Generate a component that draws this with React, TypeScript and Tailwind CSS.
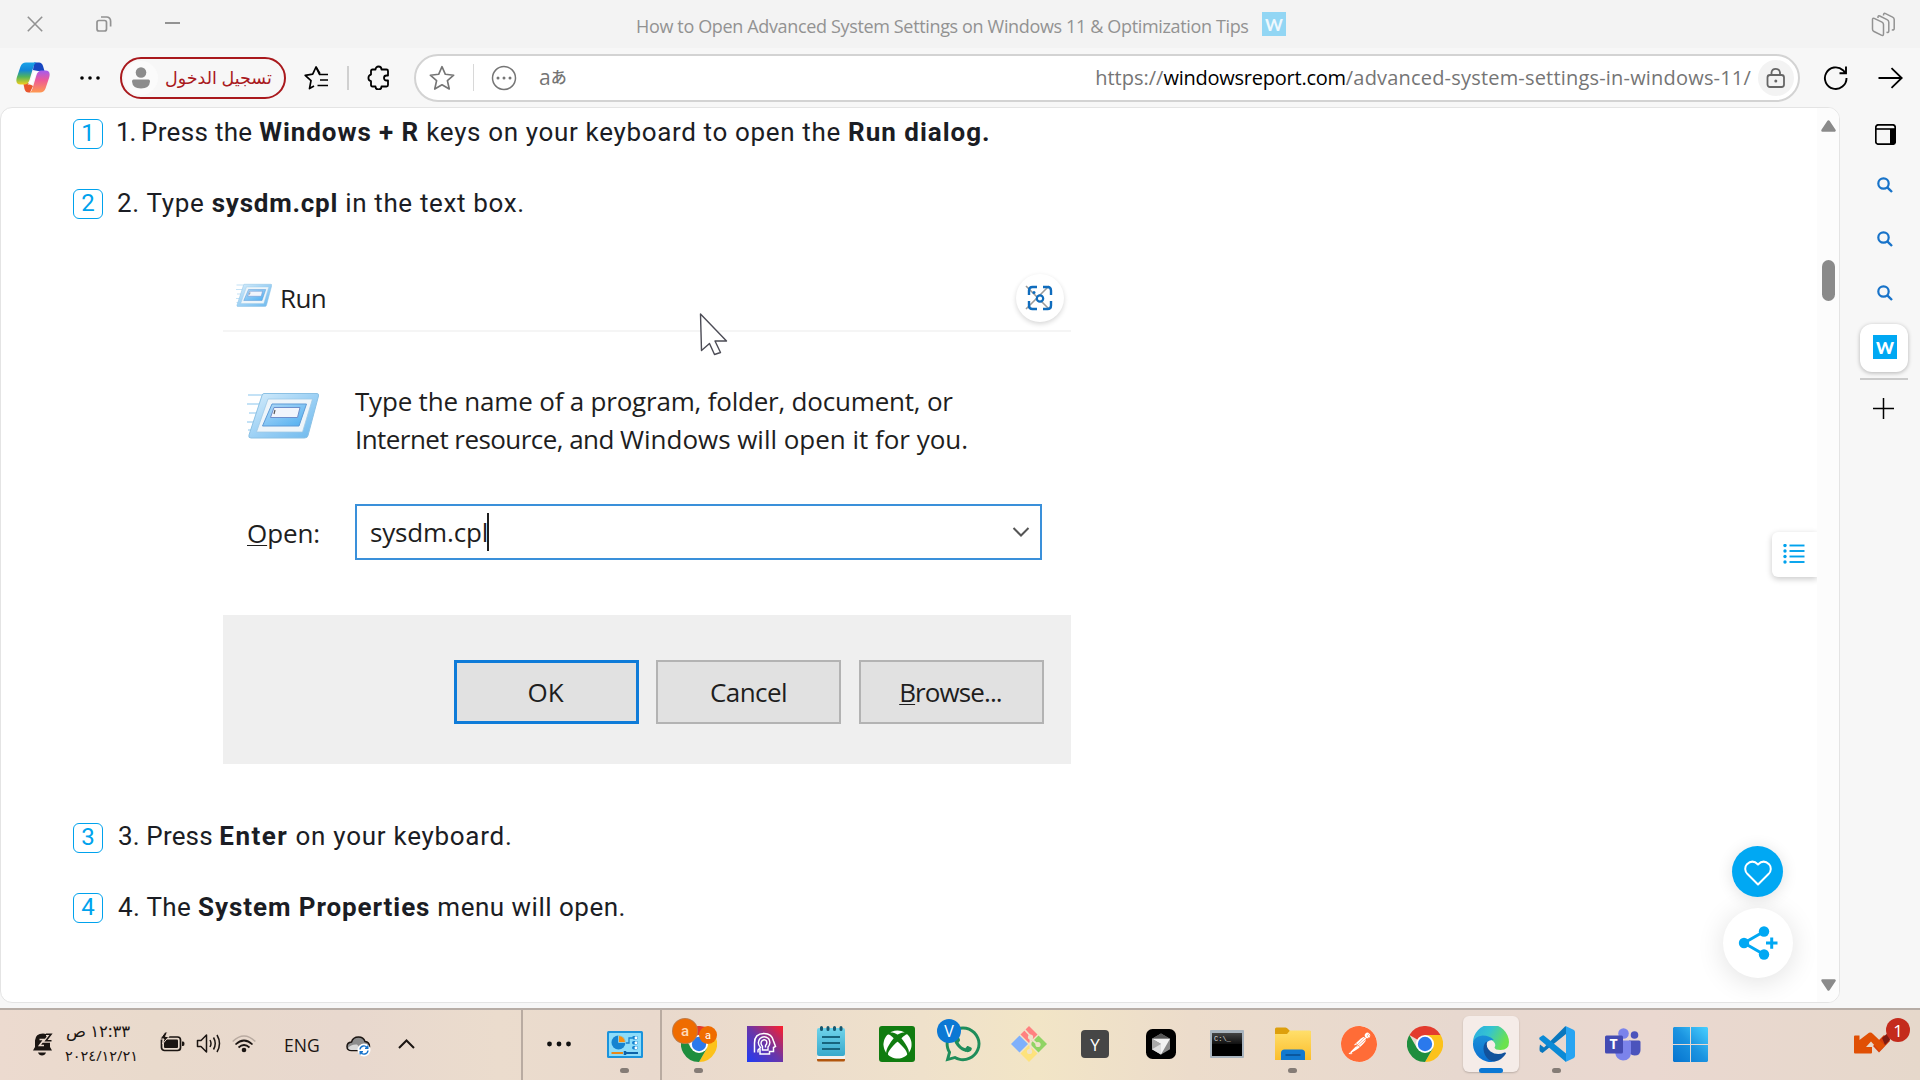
import React from "react";
import { FaWhatsapp, FaXbox } from "react-icons/fa";
import { SiPostman } from "react-icons/si";

type Segment = { text: string; bold?: boolean; cls: string };

const Svg = ({ w, h, vb, children, className = "" }: { w: number; h: number; vb?: string; children: React.ReactNode; className?: string }) => (
  <svg width={w} height={h} viewBox={vb ?? `0 0 ${w} ${h}`} fill="none" className={`shrink-0 ${className}`}>
    {children}
  </svg>
);

/* ---------- browser title bar ---------- */

function TitleBar() {
  return (
    <header className="flex h-12 items-center bg-[#f3f3f3] text-[#929292]">
      <Svg w={16} h={16} className="ml-[27px]">
        <path d="M0.8 0.8L15.2 15.2M15.2 0.8L0.8 15.2" stroke="currentColor" strokeWidth="1.6" />
      </Svg>
      <Svg w={16} h={16} className="ml-[53px]">
        <rect x="1" y="4.5" width="9.5" height="10.5" rx="2" stroke="currentColor" strokeWidth="1.7" />
        <path d="M5 1H10.5A4 4 0 0 1 14.6 5.2V10.5" stroke="currentColor" strokeWidth="1.7" />
      </Svg>
      <div className="-mt-0.5 ml-[53px] h-0.5 w-[15px] bg-[#929292]" />
      <h1 className="ml-[456px] mt-[3px] w-[613px] whitespace-nowrap font-['Open_Sans',sans-serif] text-[18px] leading-6 tracking-[-0.35px]">
        How to Open Advanced System Settings on Windows 11 &amp; Optimization Tips
      </h1>
      <div className="ml-[13px] flex size-6 items-center justify-center bg-[#92d6f4] font-['Lato',sans-serif] text-[17px] font-bold leading-none text-[#eef8fd]">W</div>
      <Svg w={25} h={25} className="ml-auto mr-6">
        <path d="M1.5 7.5Q1.5 5.7 3.2 6.4L11 10.2Q12.5 11 12.5 12.6V21.8Q12.5 24.3 10.3 23.2L3 19.5Q1.5 18.8 1.5 17.2Z" stroke="currentColor" strokeWidth="1.5" />
        <path d="M7 6V5Q7 3.3 8.8 4L16 7.6Q17.8 8.5 17.8 10.2V19Q17.8 20.8 15.5 20.3" stroke="currentColor" strokeWidth="1.5" />
        <path d="M12.5 3.5V2.8Q12.8 .8 14.6 1.6L21.6 5.2Q23.2 6 23.2 7.6V16.5Q23.2 18.4 20.8 17.8" stroke="currentColor" strokeWidth="1.5" />
      </Svg>
    </header>
  );
}

/* ---------- toolbar ---------- */

const CopilotLogo = () => (
  <Svg w={34} h={31}>
    <defs>
      <linearGradient id="cpA" x1="0" y1="0" x2="0" y2="1">
        <stop stopColor="#1aa3e8" /><stop offset=".35" stopColor="#1286d8" /><stop offset=".65" stopColor="#52b45a" /><stop offset="1" stopColor="#f2cf1d" />
      </linearGradient>
      <linearGradient id="cpB" x1="0" y1="0" x2="0" y2="1">
        <stop stopColor="#a45cf0" /><stop offset=".45" stopColor="#ee5a96" /><stop offset="1" stopColor="#ff9a50" />
      </linearGradient>
    </defs>
    <path d="M18 0.5H23Q26 .5 27 4L28.5 9H22L17 8Z" fill="#1746c0" />
    <path d="M7.500 22L12 21L17 24L14 30.500H12.500Q9.500 30.500 8.500 27Z" fill="#e8572f" />
    <path d="M10 .5H20.500Q18.500 1 17.500 4.500L13.500 18Q12 22.500 8.500 22.500H4.500Q-1 22.500 .8 15.500L4.500 4.500Q6 .5 10 .5Z" fill="url(#cpA)" />
    <path d="M24 30.500H13.500Q15.500 30 16.500 26.500L20.500 13Q22 8.500 25.500 8.500H29.500Q35 8.500 33.200 15.500L29.500 26.500Q28 30.500 24 30.500Z" fill="url(#cpB)" />
    <path d="M18 9.500H22Q20 11 18.500 16L16 22.500H11.500Q14 21 15.500 16Z" fill="#fff" />
  </Svg>
);

const STAR = "M12 1.5L15.100 8.600L22.800 9.400L17 14.500L18.700 22.200L12 18.200L5.300 22.200L7 14.500L1.200 9.400L8.900 8.600Z";

function Toolbar() {
  return (
    <div className="flex h-[59px] items-center bg-[#f7f7f7] text-black">
      <div className="ml-4 flex"><CopilotLogo /></div>
      <Svg w={20} h={4} className="ml-[30px]">
        <circle cx="2" cy="2" r="1.800" fill="#000" /><circle cx="10" cy="2" r="1.800" fill="#000" /><circle cx="18" cy="2" r="1.800" fill="#000" />
      </Svg>
      <div className="ml-5 flex h-[42px] w-[166px] items-center rounded-full border-2 border-[#a9191d] bg-[#f7f7f7]">
        <div className="ml-0.5 flex size-[34px] shrink-0 items-center justify-center rounded-full bg-[#fbfbfb]">
          <Svg w={18} h={22}>
            <circle cx="9" cy="5.500" r="5.300" fill="#8c8c8c" />
            <path d="M1.500 12.500H16.500Q18 12.500 18 14.500Q17.500 21.500 9 21.500Q.5 21.500 0 14.500Q0 12.500 1.500 12.500Z" fill="#8c8c8c" />
          </Svg>
        </div>
        <span dir="rtl" className="-mt-0.5 ml-[7px] whitespace-nowrap font-['Noto_Sans','DejaVu_Sans',sans-serif] text-[17.500px] leading-6 text-[#a9191d]">تسجيل الدخول</span>
      </div>
      <Svg w={25} h={24} className="ml-[18px]">
        <path d="M16 7.800L12 1L8.700 8.200L1.200 9.300L7 14.600L5.500 22.600L10 20" stroke="#000" strokeWidth="1.700" strokeLinejoin="round" />
        <path d="M12 1L15.500 8.300M15 8.500H24M16 14H24M13.500 19.500H24" stroke="#000" strokeWidth="1.700" />
      </Svg>
      <div className="ml-[18px] h-6 w-0.5 bg-[#d0d0d0]" />
      <Svg w={23} h={25} className="ml-[18px]">
        <path d="M8.500 4.500A3 3 0 0 1 14.500 4.500H19.500Q21 4.500 21 6V10.500H19.500A2.300 2.300 0 0 0 19.500 15.500H21V20Q21 21.500 19.500 21.500H14.500A3 3 0 0 1 8.500 21.500H5.500Q4 21.500 4 20V16.200A3.400 3.400 0 0 1 4 9.600V6Q4 4.500 5.500 4.500Z" stroke="#000" strokeWidth="1.800" strokeLinejoin="round" />
      </Svg>
      <div className="ml-6 flex h-12 w-[1386px] items-center rounded-full border-2 border-[#d3d3d3] bg-white text-[#757575]">
        <Svg w={26} h={26} vb="0 0 24 24" className="ml-[13px]">
          <path d={STAR} stroke="currentColor" strokeWidth="1.500" strokeLinejoin="round" />
        </Svg>
        <div className="ml-[18px] h-[27px] w-px bg-[#d8d8d8]" />
        <Svg w={26} h={26} className="ml-[17px]">
          <circle cx="13" cy="13" r="11.500" stroke="currentColor" strokeWidth="1.500" />
          <circle cx="7" cy="13" r="1.500" fill="currentColor" /><circle cx="13" cy="13" r="1.500" fill="currentColor" /><circle cx="19" cy="13" r="1.500" fill="currentColor" />
        </Svg>
        <div className="ml-[22px] flex h-6 items-center whitespace-nowrap">
          <span className="-mt-0.5 font-['Open_Sans',sans-serif] text-[21px] leading-6">a</span>
          <span className="-mt-1 font-['Noto_Sans_CJK_JP',sans-serif] text-[16px] font-medium leading-6">あ</span>
        </div>
        <div className="ml-auto mt-px flex whitespace-pre font-['Open_Sans',sans-serif] text-[20px] leading-6">
          <span>https://</span>
          <span className="tracking-[-0.24px] text-black">windowsreport.com</span>
          <span className="tracking-[0.19px]">/advanced-system-settings-in-windows-11/</span>
        </div>
        <div className="ml-[7px] mr-1 flex size-9 items-center justify-center rounded-full bg-[#f3f3f3]">
          <Svg w={20} h={22}>
            <rect x="1.500" y="8" width="16.500" height="12" rx="2.500" stroke="#666" strokeWidth="1.800" />
            <path d="M5.500 8V5.500A4.300 4.300 0 0 1 14 5.500V8" stroke="#666" strokeWidth="1.800" />
            <circle cx="9.800" cy="14" r="1.500" fill="#666" />
          </Svg>
        </div>
      </div>
      <Svg w={26} h={26} className="ml-[23px]">
        <path d="M23.500 13A10.800 10.800 0 1 1 20 5.200L22.500 8M23 1.500V8.200H16.500" stroke="#000" strokeWidth="1.900" />
      </Svg>
      <Svg w={25} h={22} className="ml-[29px]">
        <path d="M.5 11H23.500M13.500 1.200L23.700 11L13.500 20.800" stroke="#000" strokeWidth="1.800" />
      </Svg>
    </div>
  );
}

/* ---------- article ---------- */

function Step({ n, start, segments }: { n: number; start: string; segments: Segment[] }) {
  return (
    <div className="ml-[72px] flex h-[30px] items-start">
      <div className="flex h-[30px] w-[30px] items-center justify-center rounded-md border border-[#00a2ed] pb-0.5 font-['Roboto',sans-serif] text-[24px] leading-none text-[#00a2ed]">{n}</div>
      <p className={`${start} whitespace-pre font-['Roboto',sans-serif] text-[26px] leading-[26px] text-[#1b1d24]`}>
        {segments.map((s, i) => (
          <span key={i} className={`${s.bold ? "font-bold" : "font-normal"} ${s.cls}`}>{s.text}</span>
        ))}
      </p>
    </div>
  );
}

function RunIcon({ w, h, id }: { w: number; h: number; id: string }) {
  return (
    <Svg w={w} h={h} vb="0 0 72 48">
      <defs>
        <linearGradient id={id} x1="0" y1="0" x2="1" y2="1">
          <stop stopColor="#d9eefb" /><stop offset=".5" stopColor="#9dd1f5" /><stop offset="1" stopColor="#6cb8ed" />
        </linearGradient>
        <linearGradient id={`${id}i`} x1="0" y1="0" x2="1" y2="1">
          <stop stopColor="#b4dbf8" /><stop offset="1" stopColor="#4eaef0" />
        </linearGradient>
      </defs>
      <path d="M1 3H17M0 12H14M2 21H11M0 30H8M1 38H6" stroke="#c4e2f6" strokeWidth="2.200" />
      <path d="M17 1.500H70Q72 1.500 71.500 4L61 43.500Q60.500 46 57.500 46H4Q1 46 2 43L15 3.500Q15.500 1.500 17 1.500Z" fill={`url(#${id})`} stroke="#8cc1e4" strokeWidth="1" />
      <path d="M21 7H65.500L55.500 40H9.500Z" fill="#eef5fa" stroke="#9fc9e6" strokeWidth=".8" />
      <path d="M25 12H59.500L52 34H15.500Z" fill={`url(#${id}i)`} stroke="#5e9bd6" strokeWidth="1" />
      <path d="M27 15.500H53L50.500 25.500H23.500Z" fill="#f1f5fc" stroke="#6e8ecb" strokeWidth="1" />
      <path d="M28 18L27 22" stroke="#555" strokeWidth="1.200" />
    </Svg>
  );
}

function RunDialog() {
  return (
    <figure className="ml-[222px] mt-[11px] w-[848px] font-['Open_Sans',sans-serif] text-[26px] text-[#1e1e1e]">
      <div className="flex h-[102px] border-b-2 border-[#f5f5f5] bg-white">
        <div className="ml-[13px] mt-[53px]"><RunIcon w={36} h={25} id="runSmall" /></div>
        <span className="ml-2 mt-[50px] leading-9 tracking-[-0.6px]">Run</span>
        <div className="relative ml-auto mr-[7px] mt-11 flex size-12 items-center justify-center rounded-full bg-white shadow-[0_2px_5px_rgba(0,0,0,0.16)]">
          <Svg w={28} h={26} className="-ml-[3px]">
            <path d="M1 1L24 24M24 1L1 24" stroke="#9a9a9a" strokeWidth="1.600" />
            <path d="M4 10V5.500Q4 2 7.500 2H12M18 2H22.500Q26 2 26 5.500V10M26 16V20.500Q26 24 22.500 24H18M12 24H7.500Q4 24 4 20.500V16" stroke="#0f6cbd" strokeWidth="2.400" />
            <circle cx="15" cy="13.500" r="3.200" stroke="#0f6cbd" strokeWidth="2.200" fill="#fff" />
            <circle cx="9" cy="7.500" r="1.500" fill="#0f6cbd" />
          </Svg>
        </div>
      </div>
      <div className="flex h-[172px] pt-[51px]">
        <div className="ml-6 mt-[9px]"><RunIcon w={72} h={48} id="runLarge" /></div>
        <div className="ml-9 whitespace-nowrap leading-[37.500px]">
          <div className="tracking-[-0.2px]">Type the name of a program, folder, document, or</div>
          <div className="whitespace-pre"><span className="tracking-[-0.55px]">Internet resource, and </span><span className="tracking-[-0.02px]">Windows will open it for you.</span></div>
        </div>
      </div>
      <div className="flex h-[111px]">
        <label className="ml-6 mt-[11px] w-[108px] leading-9 tracking-[-0.1px]"><span className="underline decoration-1 underline-offset-2">O</span>pen:</label>
        <div className="flex h-14 w-[687px] items-center border-2 border-[#3a90da] bg-white">
          <span className="ml-[13px] leading-9 tracking-[-0.15px]">sysdm.cpl</span>
          <span className="-ml-px h-[38px] w-0.5 bg-[#1e1e1e]" />
          <Svg w={18} h={10} className="ml-auto mr-[10px]"><path d="M1.500 1L9 8.500L16.500 1" stroke="#555" strokeWidth="2" /></Svg>
        </div>
      </div>
      <div className="flex h-[149px] items-start bg-[#efefef] pl-[231px] pt-[45px]">
        <div className="flex h-16 w-[185px] items-center justify-center border-[3px] border-[#0e7bd8] bg-[#e1e1e1] pr-0.5">OK</div>
        <div className="ml-[17px] flex h-16 w-[185px] items-center justify-center border-2 border-[#b3b3b3] bg-[#e1e1e1] tracking-[-0.6px]">Cancel</div>
        <div className="ml-[18px] flex h-16 w-[185px] items-center justify-center border-2 border-[#b3b3b3] bg-[#e1e1e1] pr-0.5 tracking-[-0.9px]">
          <span className="underline decoration-1 underline-offset-2">B</span>rowse...
        </div>
      </div>
    </figure>
  );
}

function Article() {
  return (
    <main className="relative flex h-[896px] w-[1840px] overflow-hidden rounded-xl border border-[#e4e4e4] bg-white">
      <article className="flex-1 pt-[11px]">
        <div className="flex flex-col gap-10">
          <Step n={1} start="ml-[13px]" segments={[
            { text: "1. ", cls: "tracking-[-1px]" },
            { text: "Press the ", cls: "tracking-[0.32px]" },
            { text: "Windows + R", bold: true, cls: "tracking-[0.93px]" },
            { text: " keys on your keyboard to open the ", cls: "tracking-[0.65px]" },
            { text: "Run dialog", bold: true, cls: "tracking-[1px]" },
            { text: ".", bold: true, cls: "" },
          ]} />
          <Step n={2} start="ml-[14px] pt-px" segments={[
            { text: "2. Type ", cls: "tracking-[0.7px]" },
            { text: "sysdm.cpl", bold: true, cls: "tracking-[0.75px]" },
            { text: " in the text box.", cls: "tracking-[0.65px]" },
          ]} />
        </div>
        <RunDialog />
        <div className="mt-[59px] flex flex-col gap-10">
          <Step n={3} start="ml-[15px]" segments={[
            { text: "3. Press ", cls: "tracking-[0.15px]" },
            { text: "Enter", bold: true, cls: "tracking-[1.5px]" },
            { text: " on your keyboard.", cls: "tracking-[0.72px]" },
          ]} />
          <Step n={4} start="ml-[15px] pt-px" segments={[
            { text: "4. The ", cls: "tracking-[0.36px]" },
            { text: "System Properties", bold: true, cls: "tracking-[0.92px]" },
            { text: " menu will open.", cls: "tracking-[0.5px]" },
          ]} />
        </div>
      </article>

      <div className="flex w-[22px] flex-col items-center bg-[#fcfcfc]">
        <Svg w={15} h={12} className="mt-3"><path d="M7.500 1.500L13.500 10.500H1.500Z" fill="#8a8a8a" stroke="#8a8a8a" strokeWidth="2.500" strokeLinejoin="round" /></Svg>
        <div className="mt-[128px] h-[41px] w-[13px] rounded-full bg-[#8a8a8a]" />
        <Svg w={15} h={12} className="mb-[11px] mt-auto"><path d="M7.500 10.500L13.500 1.500H1.500Z" fill="#8a8a8a" stroke="#8a8a8a" strokeWidth="2.500" strokeLinejoin="round" /></Svg>
      </div>

      <button className="absolute left-[1771px] top-[424px] flex h-[45px] w-[45px] items-center justify-start rounded-l-md bg-white pl-[11px] shadow-[0_2px_6px_rgba(0,0,0,0.22)] [clip-path:inset(-10px_0_-10px_-10px)]">
        <Svg w={22} h={20} className="-mt-px">
          {[1.5, 7, 12.500, 18].map((y) => (
            <g key={y}><circle cx="2" cy={y} r="1.700" fill="#00a2ed" /><path d={`M6.500 ${y}H21.500`} stroke="#00a2ed" strokeWidth="1.900" /></g>
          ))}
        </Svg>
      </button>
      <button className="absolute left-[1731px] top-[738px] flex size-[51px] items-center justify-center rounded-full bg-[#00a8f3] shadow-[0_2px_16px_rgba(0,0,0,0.12)]">
        <Svg w={28} h={26} className="mt-0.5"><path d="M14 24.500L3.500 14A7 7 0 0 1 3 4.200Q8.500-1 14 4.500Q19.500-1 25 4.200A7 7 0 0 1 24.500 14Z" stroke="#fff" strokeWidth="2" strokeLinejoin="round" /></Svg>
      </button>
      <button className="absolute left-[1722px] top-[800px] flex size-[70px] items-center justify-center rounded-full bg-white shadow-[0_4px_28px_rgba(0,0,0,0.12)]">
        <Svg w={40} h={34}>
          <path d="M6 17L26 5.500M6 17L26 28.500" stroke="#00a8f3" strokeWidth="3" />
          <circle cx="6" cy="17" r="5.200" fill="#00a8f3" /><circle cx="26" cy="5.500" r="5.200" fill="#00a8f3" /><circle cx="26" cy="28.500" r="5.200" fill="#00a8f3" />
          <path d="M28 17H39.500M33.700 11.500V22.700" stroke="#00a8f3" strokeWidth="3" />
        </Svg>
      </button>
      <Svg w={31} h={44} className="absolute left-[697px] top-[204px]">
        <path d="M2.500 2L28.500 29H17L22.500 40.500L16.500 42.500L11.500 31.500L3.500 38.500Z" fill="#fff" stroke="#4c4c56" strokeWidth="1.400" strokeLinejoin="round" />
      </Svg>
    </main>
  );
}

const SearchTab = () => (
  <Svg w={16} h={16}>
    <circle cx="6.500" cy="6.500" r="5.200" stroke="#1873c9" strokeWidth="2.200" />
    <path d="M10.300 10.300L15 15" stroke="#1873c9" strokeWidth="2.400" />
  </Svg>
);

function TabRail() {
  return (
    <aside className="flex w-20 flex-col items-center pl-2">
      <Svg w={21} h={21} className="ml-[3px] mt-[17px]">
        <rect x=".8" y=".8" width="19.400" height="19.400" rx="2.500" stroke="#000" strokeWidth="1.700" />
        <path d="M1 5H20" stroke="#000" strokeWidth="1.600" /><path d="M15 5H20.500V18Q20 20 18.500 20.500H15Z" fill="#000" />
      </Svg>
      <div className="ml-0.5 mt-8 flex flex-col gap-[38px]"><SearchTab /><SearchTab /><SearchTab /></div>
      <div className="mt-[23px] flex size-12 justify-center rounded-xl bg-white pl-0.5 pt-[11px] shadow-[0_1px_4px_rgba(0,0,0,0.28)]">
        <div className="flex size-6 items-center justify-center bg-[#00a8f3] font-['Lato',sans-serif] text-[17px] font-black leading-none text-white">W</div>
      </div>
      <div className="mt-1.5 h-0.5 w-12 bg-[#cbcbcb]" />
      <Svg w={21} h={21} className="mr-[1px] mt-[18px]"><path d="M0 10.500H21M10.500 0V21" stroke="#000" strokeWidth="1.500" /></Svg>
    </aside>
  );
}

/* ---------- taskbar ---------- */

const Chrome = () => (
  <Svg w={36} h={36}>
    <path d="M18 18L2.400 9A18 18 0 0 1 33.600 9Z" fill="#e33b2e" />
    <path d="M18 9H33.600A18 18 0 0 1 18 36L25.800 22.500Z" fill="#fcc21b" />
    <path d="M2.400 9A18 18 0 0 0 18 36L25.800 22.500L10.200 22.500Z" fill="#1e8e3e" />
    <circle cx="18" cy="18" r="9" fill="#fff" /><circle cx="18" cy="18" r="7.200" fill="#2b79ec" />
  </Svg>
);

const ControlPanel = () => (
  <Svg w={36} h={27}>
    <rect width="36" height="27" rx="1.500" fill="#1a93dc" /><rect x="2" y="2" width="32" height="23" rx=".5" fill="#8cdcfa" />
    <circle cx="11.500" cy="11.500" r="7" fill="#1583d0" /><path d="M11.500 11.500V4.500A7 7 0 0 1 18.500 11.500Z" fill="#f78f12" stroke="#8cdcfa" strokeWidth=".8" />
    <path d="M19 12H22V7H25" stroke="#1583d0" strokeWidth="1.300" />
    {[5, 10, 15].map((y) => <g key={y}><rect x="25" y={y} width="6" height="3.400" rx="1.700" fill="#1583d0" /><circle cx="29" cy={y + 1.7} r="1.500" fill="#fff" /></g>)}
    <path d="M4.500 22H16" stroke="#e8881a" strokeWidth="2" /><path d="M17 22H31" stroke="#0d63a9" strokeWidth="2" /><path d="M18 20V24" stroke="#0d63a9" strokeWidth="2.500" />
  </Svg>
);

const HeadApp = () => (
  <Svg w={36} h={36}>
    <defs><linearGradient id="head" x1="0" y1="1" x2="1" y2="0"><stop offset="0" stopColor="#1f3cf5" /><stop offset=".5" stopColor="#6a35a8" /><stop offset="1" stopColor="#ff1e2a" /></linearGradient></defs>
    <rect width="36" height="36" fill="url(#head)" />
    <path d="M7.500 26.500V17Q7.500 7.500 17 7.500Q25 7.500 26.500 15L28.500 20.500L26.500 21.500V25.500H22.500V28H13V22.500" stroke="#fff" strokeWidth="1.500" />
    <path d="M11 26.500V24L13.500 21.500Q9.500 17 13 12.500Q17 9 21.500 12.500Q24.500 17 21 21V24H15.500V20.500Q12.800 17.500 15 14.800Q17.500 12.500 19.500 15Q20.500 17.500 18.500 19.500V21.500" stroke="#fff" strokeWidth="1.400" />
  </Svg>
);

const Notepad = () => (
  <Svg w={28} h={36}>
    <defs><linearGradient id="note" x1="0" y1="0" x2="0" y2="1"><stop stopColor="#6fd3ea" /><stop offset="1" stopColor="#38a9cc" /></linearGradient></defs>
    <rect y="29" width="28" height="6.500" rx="1.500" fill="#b2560d" /><rect y="27" width="28" height="6" fill="#f4f1ee" /><rect y="2" width="28" height="28" rx="2" fill="url(#note)" />
    <path d="M4.500 1.500V3.500M11 1.500V3.500M17.500 1.500V3.500M24 1.500V3.500" stroke="#17586f" strokeWidth="3" strokeLinecap="round" />
    <path d="M5 11H23M5 17H23M5 23H23" stroke="#17647d" strokeWidth="2" />
  </Svg>
);

const GitLogo = () => (
  <Svg w={36} h={36}>
    <path d="M18 0L26.500 8.500L18 17L9.500 8.500Z" fill="#ff8180" /><path d="M8.500 9.500L17 18L8.500 26.500L0 18Z" fill="#7fb0fb" />
    <path d="M27.500 9.500L36 18L27.500 26.500L19 18Z" fill="#90d464" /><path d="M18 19L26.500 27.500L18 36L9.500 27.500Z" fill="#fde27c" />
    <path d="M13 3L19.500 10V26M19.500 12L27 19" stroke="#efe2ca" strokeWidth="1.800" />
    <circle cx="19.500" cy="11" r="2.600" fill="#efe2ca" /><circle cx="27" cy="18.500" r="2.600" fill="#efe2ca" /><circle cx="18.500" cy="25.500" r="2.600" fill="#efe2ca" />
  </Svg>
);

const CursorApp = () => (
  <Svg w={30} h={30}>
    <rect width="30" height="30" rx="6.500" fill="#000" />
    <path d="M15 4.500L24 9.800V20.200L15 25.500L6 20.200V9.800Z" fill="#8a8a8a" /><path d="M15 4.500L24 9.800L6 9.800Z" fill="#555" /><path d="M6 9.800H24L15 25.500V15Z" fill="#f2f2f2" /><path d="M6 9.800L15 15V25.500L6 20.200Z" fill="#a9a9a9" /><path d="M6 20.200L15 15V25.500Z" fill="#dedede" />
  </Svg>
);

const Terminal = () => (
  <div className="flex h-7 w-[34px] flex-col rounded-[1px] border-2 border-t-[3px] border-[#a9b4be] bg-black">
    <span className="whitespace-nowrap bg-gradient-to-b from-[#444] to-[#111] pl-0.5 pt-px font-['Liberation_Mono',monospace] text-[7px] leading-[10px] text-[#ddd]">C:\_</span>
  </div>
);

const Folder = () => (
  <Svg w={36} h={34}>
    <defs><linearGradient id="fold" x1="0" y1="0" x2="0" y2="1"><stop stopColor="#ffdf6b" /><stop offset="1" stopColor="#fbbd2b" /></linearGradient></defs>
    <path d="M0 2Q0 .5 1.500 .5H10.500Q12 .5 13 2L15 4H34Q36 4 36 6V10H0Z" fill="#dd9f0c" />
    <path d="M0 7H12L15 3.500H34.500Q36 3.500 36 5V33H0Z" fill="url(#fold)" />
    <path d="M6 33V26Q6 22.500 9.500 22.500H26.500Q30 22.500 30 26V33Z" fill="#1279cf" /><path d="M10.500 28H25.500" stroke="#0a4f92" strokeWidth="1.600" />
  </Svg>
);

const Edge = () => (
  <Svg w={36} h={36}>
    <defs>
      <linearGradient id="edA" x1="0" y1="0" x2="1" y2=".4"><stop stopColor="#28a9e6" /><stop offset=".5" stopColor="#35c4cf" /><stop offset="1" stopColor="#6be24d" /></linearGradient>
      <linearGradient id="edB" x1="0" y1="0" x2="0" y2="1"><stop stopColor="#1a8fd8" /><stop offset="1" stopColor="#0b6fd0" /></linearGradient>
    </defs>
    <path d="M0 17A18 18 0 0 1 36 16Q36 24 27.500 24Q22 24 21.500 21.500Q23.500 18.500 20.500 15.500Q16 11.500 9 11.500Q3 12 0 17Z" fill="url(#edA)" />
    <path d="M0 17Q1.500 10 9.500 9.500Q17 9.500 20.800 14Q14 13 12.500 20Q12 30 22 35.500A18 18 0 0 1 0 17Z" fill="url(#edB)" />
    <path d="M12 17Q9 22 12 29Q15 35 22 35.500Q29 34 33 27.500Q33 26 31.500 26.500Q24 30 17.500 25.500Q12.500 21.500 14 15.500Q12.800 16 12 17Z" fill="#12529c" />
  </Svg>
);

const VSCode = () => (
  <Svg w={36} h={36}>
    <path d="M26.500 0L5 21.500L1 18.500Q0 24 1 25.500L3.500 27L27 8V1Z" fill="#0a77bd" />
    <path d="M.5 11.500L3.500 9.500Q4.500 9 5.500 10L27 27.500V36L.5 13.500Q0 12.500 .5 11.500Z" fill="#0b8ad6" />
    <path d="M26.500 0L34.500 3.800Q36 4.500 36 6V30Q36 31.500 34.500 32.200L26.500 36Q27 35 27 34V2Q27 1 26.500 0Z" fill="#27a4f2" />
  </Svg>
);

const Teams = () => (
  <div className="relative flex">
    <Svg w={36} h={33}>
      <circle cx="29.500" cy="7" r="3.800" fill="#4b53bc" /><path d="M24 12.500H34Q35.500 12.500 35.500 14V22Q35.500 27.500 29.500 27.500Q24 27 24 22Z" fill="#4b53bc" />
      <circle cx="18.500" cy="5.500" r="5.300" fill="#7b83eb" /><path d="M10 12.500H24.500Q26 12.500 26 14V24Q26 32.500 18 32.500Q11 32 10 24Z" fill="#7b83eb" />
      <rect y="7.500" width="18" height="18" rx="1.500" fill="#444bb3" />
    </Svg>
    <span className="absolute left-[4.500px] top-[8px] font-['Open_Sans',sans-serif] text-[14px] font-bold leading-4 text-white">T</span>
  </div>
);

const Windows = () => (
  <Svg w={35} h={35} className="ml-0.5 mt-px">
    <defs><linearGradient id="win" x1="0" y1="35" x2="35" y2="0" gradientUnits="userSpaceOnUse"><stop stopColor="#0573cf" /><stop offset=".5" stopColor="#1b93e0" /><stop offset="1" stopColor="#48d0ff" /></linearGradient></defs>
    <path d="M1 0H17V17H0V1ZM18 0H34L35 1V17H18ZM0 18H17V35H1L0 34ZM18 18H35V34L34 35H18Z" fill="url(#win)" />
  </Svg>
);

function Cell({ children, dot, active }: { children: React.ReactNode; dot?: boolean; active?: boolean }) {
  return (
    <div className={`relative flex w-[66px] items-center justify-center ${active ? "h-14" : "h-[68px]"}`}>
      {active && <div className="absolute left-[5px] h-14 w-14 rounded-md bg-[#f5ece8] shadow-[0_1px_2px_rgba(0,0,0,0.2)]" />}
      <div className="relative flex">{children}</div>
      {dot && <div className="absolute bottom-[5px] left-[28px] h-[5px] w-[9px] rounded-full bg-[#857c76]" />}
      {active && <div className="absolute bottom-[-1px] h-[5px] w-6 rounded-full bg-[#0b78d4]" />}
    </div>
  );
}

function Tray() {
  return (
    <div className="flex h-[68px] w-[521px] items-center text-[#1b1512]">
      <Svg w={22} h={25} className="ml-8">
        <path d="M1 18.500L3 15V8.500Q3.500 1.500 11 1.500Q18 1.500 18 9V15L20 18.500Z" fill="#1b1512" /><path d="M6 20.500H14Q13 23.500 10 23.500Q7 23.500 6 20.500Z" fill="#1b1512" />
        <path d="M7.500 7.500H12L7.500 13.500H12" stroke="#ead9cd" strokeWidth="1.600" /><path d="M14 2.200H19L14 8.800H19.500" stroke="#ead9cd" strokeWidth="4" /><path d="M14 2.200H19L14 8.800H19.500" stroke="#1b1512" strokeWidth="1.600" />
      </Svg>
      <div className="ml-[11px] flex w-[71px] flex-col items-start whitespace-nowrap font-['Noto_Sans','DejaVu_Sans',sans-serif] text-[16.500px] leading-6">
        <span dir="rtl" className="mt-[-3px] pl-px tracking-[-0.2px]">١٢:٣٣ ص</span>
        <span className="text-[14.500px] tracking-[-0.1px]">٢٠٢٤/١٢/٢١</span>
      </div>
      <Svg w={25} h={20} className="-mt-1 ml-[24px]">
        <rect x="1.500" y="5" width="19" height="13.500" rx="3" stroke="#1b1512" strokeWidth="1.700" /><rect x="4" y="7.500" width="14" height="8.500" rx="1" fill="#1b1512" /><path d="M22 9.500V14H23Q24.500 14 24.500 11.700Q24.500 9.500 23 9.500Z" fill="#1b1512" />
        <path d="M5 0L0 7H4L2.500 12L9 4.500H5.500L7.500 0Z" fill="#1b1512" stroke="#ead9cd" strokeWidth="1" />
      </Svg>
      <Svg w={26} h={22} className="ml-[11px]">
        <path d="M1.500 7.500H5L10.500 2V19L5 13.500H1.500Z" stroke="#1b1512" strokeWidth="1.500" strokeLinejoin="round" />
        <path d="M14 7Q16 10.500 14 14M17.500 4.500Q21 10.500 17.500 16.500M21 2Q26 10.500 21 19" stroke="#1b1512" strokeWidth="1.500" />
      </Svg>
      <Svg w={24} h={18} className="ml-[10px]">
        <path d="M.7 6.500Q12-4.500 23.300 6.500" stroke="#b9aba1" strokeWidth="1.600" /><path d="M3.500 9.500Q12 1.500 20.500 9.500M6.500 12.500Q12 7.500 17.500 12.500" stroke="#1b1512" strokeWidth="1.700" /><circle cx="12" cy="15" r="2.300" fill="#1b1512" />
      </Svg>
      <span className="ml-[28px] mt-px font-['Open_Sans',sans-serif] text-[17.500px] leading-6">ENG</span>
      <Svg w={26} h={21} className="ml-[26px] mt-1">
        <path d="M5.500 14.500Q1 14.500 1 10.500Q1 6.500 5.500 6Q7 1 12.500 1Q17.500 1 19 5.500Q23.500 6 23.500 10.500Q23.500 14.500 19 14.500Z" fill="#8c8c8c" stroke="#1b1512" strokeWidth="1.500" /><path d="M2 12Q5 8 11 8.500L16 14H5Q3 14 2 12Z" fill="#d8d8d8" />
        <circle cx="18" cy="14" r="6.500" fill="#fff" /><path d="M14 13.500A4 4 0 0 1 21.500 12M22 14.500A4 4 0 0 1 14.500 16M21.800 9.500V12.300H19M14.200 18.500V15.700H17" stroke="#1673cc" strokeWidth="1.400" />
      </Svg>
      <Svg w={17} h={10} className="ml-[26px]"><path d="M1 9L8.500 1.500L16 9" stroke="#1b1512" strokeWidth="2" /></Svg>
    </div>
  );
}

function Taskbar() {
  return (
    <footer className="flex h-[72px] items-start border-t-2 border-[#b7ada6] bg-[linear-gradient(90deg,#ecdacf_0%,#e9dacc_8%,#e8d8ce_18%,#ebdccd_26%,#e9d9cd_34%,#efe1cb_48%,#f2e5c6_54%,#ecdccb_62%,#e7d8cf_76%,#ead8d0_86%,#e6d8cb_100%)]">
      <Tray />
      <div className="h-[70px] w-0.5 bg-[#b9aba1]" />
      <Svg w={24} h={6} className="ml-6 mt-[31px]"><circle cx="2.500" cy="3" r="2.400" fill="#111" /><circle cx="12" cy="3" r="2.400" fill="#111" /><circle cx="21.500" cy="3" r="2.400" fill="#111" /></Svg>
      <div className="ml-[21px] flex"><Cell dot><ControlPanel /></Cell></div>
      <div className="ml-[2px] h-[70px] w-0.5 bg-[#b9aba1]" />
      <div className="ml-1 flex items-center">
        <Cell dot>
          <Chrome />
          <span className="absolute left-[18px] top-0 flex size-[18px] items-center justify-center rounded-full bg-[#ef6c00] font-['Roboto',sans-serif] text-[11px] leading-none text-white">a</span>
          <span className="absolute -left-2 -top-[7px] flex size-6 items-center justify-center rounded-full bg-[#ef6c00] font-['Roboto',sans-serif] text-[15px] font-medium leading-none text-[#ffd9b8] ring-1 ring-[#c07a45]">a</span>
        </Cell>
        <Cell><HeadApp /></Cell>
        <Cell><Notepad /></Cell>
        <Cell>
          <div className="flex size-9 items-center justify-center rounded-[3px] bg-[#107c10]"><FaXbox size={29} color="#fff" /></div>
        </Cell>
        <Cell>
          <FaWhatsapp size={40} color="#1e8d5b" className="-m-0.5" />
          <span className="absolute -left-2 -top-[7px] flex size-6 items-center justify-center rounded-full bg-[#0b78d4] font-['Open_Sans',sans-serif] text-[16px] leading-none text-white">V</span>
        </Cell>
        <Cell><GitLogo /></Cell>
        <Cell><div className="flex size-7 items-center justify-center rounded-sm bg-[#464646] font-['Open_Sans',sans-serif] text-[17px] leading-none text-white">Y</div></Cell>
        <Cell><CursorApp /></Cell>
        <Cell><Terminal /></Cell>
        <Cell dot><Folder /></Cell>
        <Cell><div className="flex rounded-full bg-white"><SiPostman size={36} color="#ff6c37" /></div></Cell>
        <Cell><Chrome /></Cell>
        <Cell active><Edge /></Cell>
        <Cell dot><VSCode /></Cell>
        <Cell><Teams /></Cell>
        <Cell><Windows /></Cell>
      </div>
      <div className="relative ml-[132px] mt-[22px] flex">
        <Svg w={36} h={22}>
          <path d="M30 3L36 9L25 20.500L19 14Z" fill="#d93d08" /><path d="M28 6L35 0L36 8L31 13Z" fill="#7e1c12" />
          <path d="M0 4.500Q0 3.500 1 3.500H5.500V8L15 .8Q17 0 19 2L31 13.500L25.500 19L17 9.500L12 15H18V20.500Q18 21.500 17 21.500H1Q0 21.500 0 20.500Z" fill="#e04f04" />
        </Svg>
        <span className="absolute -top-[14px] left-8 flex size-6 items-center justify-center rounded-full bg-[#c42b1c] font-['Open_Sans',sans-serif] text-[17px] leading-none text-white">1</span>
      </div>
    </footer>
  );
}

export default function App() {
  return (
    <div className="flex h-[1080px] w-[1920px] flex-col overflow-hidden bg-[#f7f7f7]">
      <TitleBar />
      <Toolbar />
      <div className="flex h-[901px]">
        <Article />
        <TabRail />
      </div>
      <Taskbar />
    </div>
  );
}
